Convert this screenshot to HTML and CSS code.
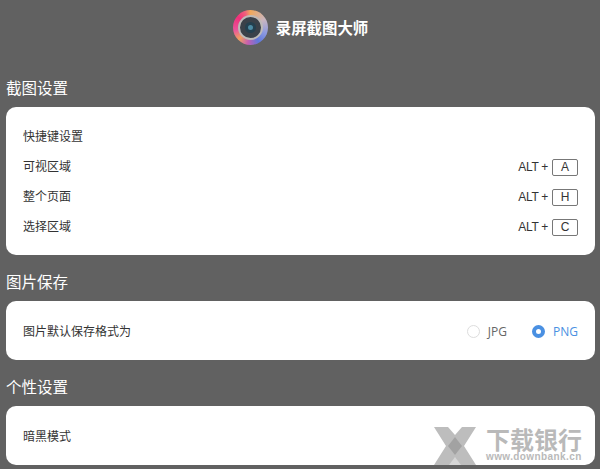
FILE: index.html
```html
<!DOCTYPE html>
<html lang="zh-CN">
  <head>
    <meta charset="UTF-8" />
    <title>录屏截图大师</title>
    <link rel="stylesheet" href="styles.css">
  </head>
  <body>
    <header class="top">
      <div class="logo">
        <div class="lens">
          <div class="pupil"></div>
        </div>
      </div>
      <span class="app-name">录屏截图大师</span>
    </header>

    <h2 class="section-title">截图设置</h2>
    <div class="card card-keys">
      <div class="row">快捷键设置</div>
      <div class="row">
        <span>可视区域</span>
        <span class="shortcut">ALT + <kbd class="key">A</kbd></span>
      </div>
      <div class="row">
        <span>整个页面</span>
        <span class="shortcut">ALT + <kbd class="key">H</kbd></span>
      </div>
      <div class="row">
        <span>选择区域</span>
        <span class="shortcut">ALT + <kbd class="key">C</kbd></span>
      </div>
    </div>

    <h2 class="section-title">图片保存</h2>
    <div class="card">
      <div class="row">
        <span>图片默认保存格式为</span>
        <span class="radios">
          <span class="radio"><i class="dot"></i>JPG</span>
          <span class="radio radio-on"><i class="dot"></i>PNG</span>
        </span>
      </div>
    </div>

    <h2 class="section-title">个性设置</h2>
    <div class="card">
      <div class="row">暗黑模式</div>
    </div>

    <!-- watermark over the corner -->
    <div class="watermark">
      <svg width="42" height="38" viewBox="0 0 42 38">
        <polygon points="0,0 14,0 21,8 28,0 42,0 30,19 42,38 0,38 12,19" fill="#bdbdbd" />
        <polygon points="21,10 28,19 21,28 14,19" fill="#a2a2a2" />
        <polygon points="21,30 27,38 15,38" fill="#d6d6d6" />
      </svg>
      <div class="wm-text">
        <div class="wm-name">下载银行</div>
        <div class="wm-url">www.downbank.cn</div>
      </div>
    </div>
  </body>
</html>
```

FILE: styles.css
```css
html,
body {
  height: 469px;
  overflow: hidden;
}
body {
  background: #616161;
  color: #333;
  font-family: "Liberation Sans", "Noto Sans CJK SC", sans-serif;
  font-size: 12px;
  margin: 0;
  padding: 0 5px 0 6px;
  position: relative;
}
.top {
  display: flex;
  align-items: center;
  justify-content: center;
  gap: 8px;
  height: 54px;
}
.logo {
  align-items: center;
  background: conic-gradient(#f0a85c 0deg, #c9b6c0 60deg, #8d9ae0 110deg, #5f78dc 150deg, #c65fb0 190deg, #efa060 225deg, #e9569c 260deg, #f0307a 310deg, #f0607c 340deg, #f0a85c 360deg);
  border-radius: 50%;
  display: flex;
  flex: none;
  height: 35px;
  justify-content: center;
  width: 35px;
}
.lens {
  align-items: center;
  background: #3a4149;
  border: 2px solid #bdbab8;
  border-radius: 50%;
  box-sizing: border-box;
  display: flex;
  height: 25px;
  justify-content: center;
  width: 25px;
}
.pupil {
  background: #4d8ba3;
  border: 3px solid #24404f;
  border-radius: 50%;
  height: 5px;
  width: 5px;
}
.app-name {
  color: #fff;
  font-size: 15.4px;
  font-weight: bold;
}
.section-title {
  color: #fff;
  font-size: 15.5px;
  font-weight: normal;
  line-height: 22px;
  margin: 0;
  padding-top: 24px;
  height: 29px;
}
.card {
  background: #fff;
  border-radius: 10px;
  box-sizing: border-box;
  display: flex;
  flex-direction: column;
  justify-content: center;
  height: 59px;
  padding: 2px 17px 0;
  margin-bottom: -7px;
}
.card-keys {
  height: 148px;
}
.row {
  display: flex;
  align-items: center;
  justify-content: space-between;
  height: 30px;
  line-height: 30px;
}
.shortcut {
  display: flex;
  align-items: center;
  gap: 4px;
  letter-spacing: -0.3px;
}
.key {
  border: 1px solid #777;
  border-radius: 2px;
  box-sizing: border-box;
  font-family: "Liberation Sans", sans-serif;
  font-size: 12px;
  height: 17px;
  letter-spacing: 0;
  line-height: 15px;
  text-align: center;
  width: 26px;
}
.radios {
  display: flex;
  gap: 25px;
}
.radio {
  display: flex;
  align-items: center;
  gap: 8px;
  color: #666;
  font-family: "Open Sans", sans-serif;
  font-weight: 500;
}
.dot {
  border: 1px solid #ddd;
  border-radius: 50%;
  box-sizing: border-box;
  height: 13px;
  width: 13px;
}
.radio-on {
  color: #4a90e2;
}
.radio-on .dot {
  background: #fff;
  border: 4px solid #4a90e2;
}
.watermark {
  position: absolute;
  left: 434px;
  top: 427px;
  display: flex;
  align-items: flex-start;
  gap: 10px;
  color: #b9b9b9;
}
.wm-name {
  font-family: "Noto Sans CJK SC", sans-serif;
  font-size: 24px;
  font-weight: bold;
  line-height: 24px;
}
.wm-url {
  font-family: "Liberation Sans", sans-serif;
  font-size: 10px;
  font-weight: bold;
  letter-spacing: 0.4px;
  line-height: 12px;
}
```
